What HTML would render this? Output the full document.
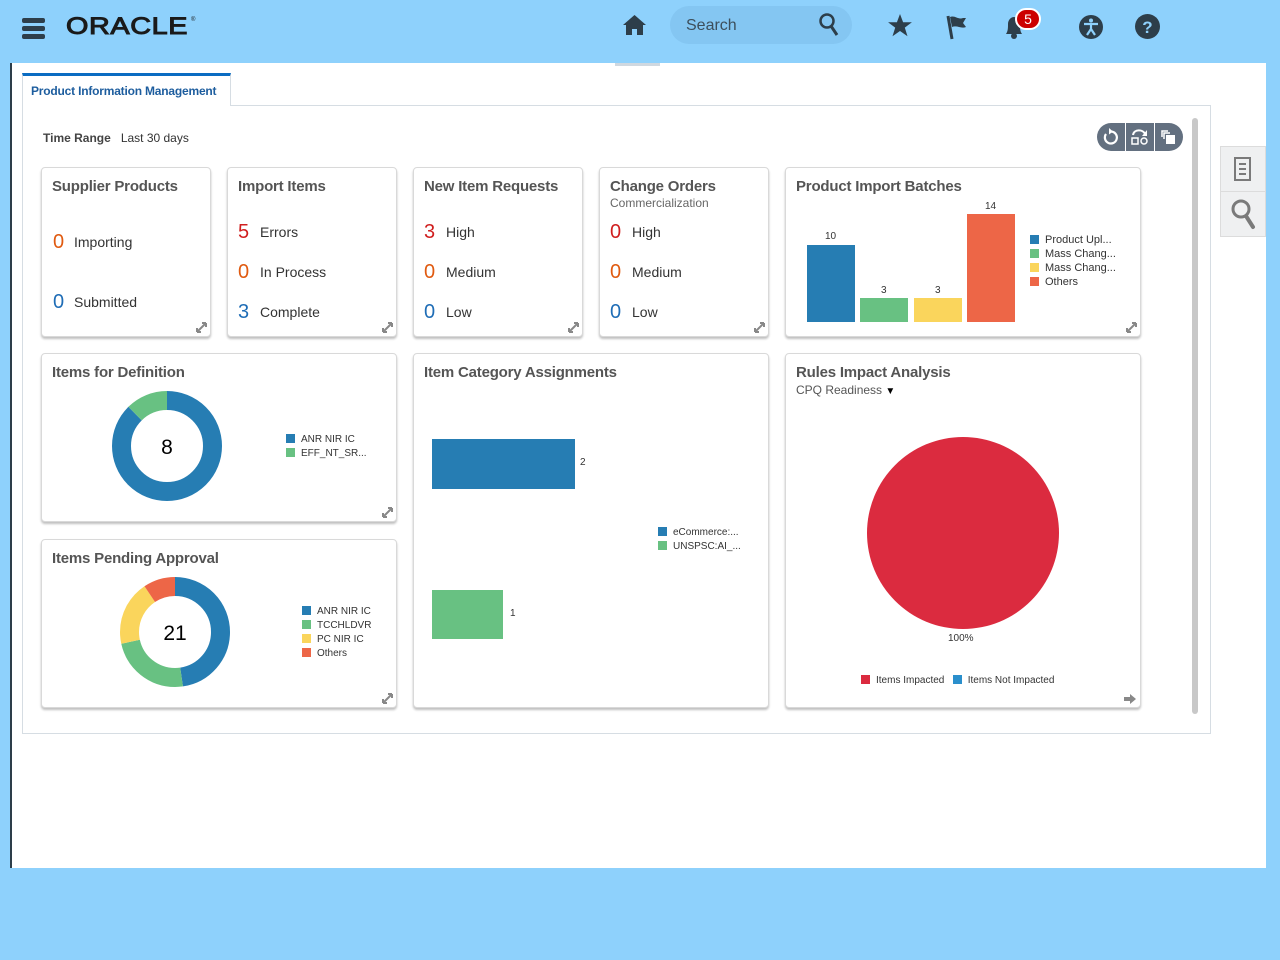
<!DOCTYPE html>
<html><head><meta charset="utf-8"><style>
*{margin:0;padding:0;box-sizing:border-box}
body{width:1280px;height:960px;background:#8ed1fc;font-family:"Liberation Sans",sans-serif;position:relative;overflow:hidden;color:#333}
.a{position:absolute}
.card{position:absolute;background:#fff;border:1px solid #d9d9d9;border-radius:4px;box-shadow:0 2px 2px rgba(0,0,0,.25)}
.t{position:absolute;left:10px;top:10px;font-size:15px;font-weight:bold;color:#555;letter-spacing:-0.2px}
.n{position:absolute;font-size:20px;line-height:20px}
.l{position:absolute;font-size:14px;color:#333}
.r{color:#d01f1f}.o{color:#e05a10}.b{color:#1f6db6}
.ex{position:absolute;right:3px;bottom:3px;width:11px;height:11px}
.lg{position:absolute;font-size:11px;color:#333;line-height:14px}
.lg i{display:inline-block;width:9px;height:9px;margin-right:6px;vertical-align:-1px}
</style></head><body>
<!-- top bar -->
<div class="a" style="left:22px;top:18px;width:23px;height:22px">
<div class="a" style="left:0;top:0;width:23px;height:5px;background:#2d3e4a;border-radius:2px"></div>
<div class="a" style="left:0;top:8px;width:23px;height:5px;background:#2d3e4a;border-radius:2px"></div>
<div class="a" style="left:0;top:16px;width:23px;height:5px;background:#2d3e4a;border-radius:2px"></div>
</div>
<div class="a" style="left:66px;top:13px;font-size:24px;font-weight:normal;-webkit-text-stroke:1px #1a1a1a;letter-spacing:0.5px;color:#1a1a1a;transform:scaleX(1.2);transform-origin:left">ORACLE</div>
<div class="a" style="left:191px;top:17px;font-size:6px;color:#1a1a1a">®</div>
<svg class="a" style="left:622px;top:14px" width="25" height="22" viewBox="0 0 25 22"><path d="M12.5 1L1 11h3v10h6v-6h5v6h6V11h3z" fill="#2d3e4a"/></svg>
<div class="a" style="left:670px;top:6px;width:182px;height:38px;border-radius:19px;background:#84c6f2"></div>
<div class="a" style="left:686px;top:17px;font-size:16px;color:#3d4f5c">Search</div>
<svg class="a" style="left:818px;top:12px" width="22" height="26" viewBox="0 0 22 26"><circle cx="9" cy="9" r="6.5" fill="none" stroke="#2d3e4a" stroke-width="2.5"/><path d="M13 14l6 9" stroke="#2d3e4a" stroke-width="3"/></svg>
<svg class="a" style="left:887px;top:14px" width="26" height="24" viewBox="0 0 26 24"><path d="M13 0l3.1 8.3h8.8l-7.1 5.3 2.7 8.6L13 17l-7.5 5.2 2.7-8.6L1.1 8.3h8.8z" fill="#2d3e4a"/></svg>
<svg class="a" style="left:946px;top:14px" width="26" height="26" viewBox="0 0 26 26"><path d="M2 2l4 23" stroke="#2d3e4a" stroke-width="3"/><path d="M4 3c5-2 8 3 13 1l3 0-3 5 3 4c-5 2-9-2-14 0z" fill="#2d3e4a"/></svg>
<svg class="a" style="left:1002px;top:14px" width="24" height="26" viewBox="0 0 24 26"><path d="M4 20c2-3 2-6 2-10 0-4 3-7 6-7s6 3 6 7c0 4 0 7 2 10z" fill="#2d3e4a"/><circle cx="12" cy="22" r="3" fill="#2d3e4a"/></svg>
<div class="a" style="left:1015px;top:8px;width:26px;height:22px;border-radius:11px;background:#c00;border:2px solid #fff;color:#fff;font-size:14px;text-align:center;line-height:18px">5</div>
<svg class="a" style="left:1079px;top:15px" width="24" height="24" viewBox="0 0 24 24"><circle cx="12" cy="12" r="12" fill="#2d3e4a"/><circle cx="12" cy="5.5" r="2" fill="#8ed1fc"/><path d="M5 9h14M12 9v5M12 14l-4 6M12 14l4 6" stroke="#8ed1fc" stroke-width="2.2" fill="none"/></svg>
<svg class="a" style="left:1135px;top:14px" width="25" height="25" viewBox="0 0 25 25"><circle cx="12.5" cy="12.5" r="12.5" fill="#2d3e4a"/><text x="12.5" y="19" text-anchor="middle" font-size="17" font-weight="bold" fill="#8ed1fc" font-family="Liberation Sans">?</text></svg>

<!-- content area -->
<div class="a" style="left:10px;top:63px;width:1256px;height:805px;background:#fff;border-left:2px solid #2d3e4a"></div>
<div class="a" style="left:615px;top:63px;width:45px;height:3px;background:#cfd8e0"></div>
<div class="a" style="left:22px;top:105px;width:1189px;height:629px;border:1px solid #d6dde3"></div>
<div class="a" style="left:22px;top:73px;width:209px;height:33px;background:#fff;border:1px solid #d6dde3;border-top:3px solid #0a6cc2;border-bottom:none"></div>
<div class="a" style="left:31px;top:84px;font-size:12px;font-weight:bold;color:#1d5d9e;letter-spacing:-0.2px">Product Information Management</div>
<div class="a" style="left:43px;top:131px;font-size:12px;color:#333"><b style="color:#444">Time Range</b>&nbsp;&nbsp; Last 30 days</div>
<!-- toolbar -->
<div class="a" style="left:1097px;top:123px;width:86px;height:28px;border-radius:14px;background:#637080"></div>
<div class="a" style="left:1125px;top:123px;width:1px;height:28px;background:#fff"></div>
<div class="a" style="left:1154px;top:123px;width:1px;height:28px;background:#fff"></div>
<svg class="a" style="left:1102px;top:128px" width="18" height="18" viewBox="0 0 18 18"><path d="M4 6a6 6 0 1 0 5-2.5" stroke="#fff" stroke-width="2.2" fill="none"/><path d="M7 0l4 3.5-4 3z" fill="#fff"/></svg>
<svg class="a" style="left:1130px;top:128px" width="20" height="18" viewBox="0 0 20 18"><path d="M3 7c1-6 10-6 12-1" stroke="#fff" stroke-width="2" fill="none"/><path d="M17 2v6h-5z" fill="#fff"/><rect x="2" y="10" width="6" height="6" stroke="#fff" stroke-width="1.5" fill="none"/><circle cx="14" cy="13" r="3" stroke="#fff" stroke-width="1.5" fill="none"/></svg>
<svg class="a" style="left:1160px;top:129px" width="18" height="16" viewBox="0 0 18 16"><path d="M2 8V2h6M4 10V4h6" stroke="#fff" stroke-width="1.5" fill="none"/><rect x="6" y="6" width="9" height="9" fill="#fff"/></svg>
<div class="a" style="left:1192px;top:118px;width:6px;height:596px;background:#c8c8c8;border-radius:3px"></div>
<!-- right drawer -->
<div class="a" style="left:1220px;top:146px;width:46px;height:91px;background:#eff0f1;border:1px solid #dcdcdc"></div>
<div class="a" style="left:1220px;top:191px;width:46px;height:1px;background:#dcdcdc"></div>
<svg class="a" style="left:1233px;top:156px" width="20" height="26" viewBox="0 0 20 26"><rect x="2" y="2" width="15" height="22" stroke="#7a7a7a" stroke-width="2" fill="none"/><path d="M6 8h7M6 13h7M6 18h7" stroke="#7a7a7a" stroke-width="2"/></svg>
<svg class="a" style="left:1230px;top:198px" width="28" height="34" viewBox="0 0 28 34"><circle cx="11" cy="11" r="8" stroke="#7a7a7a" stroke-width="3" fill="none"/><path d="M16 18l7 11" stroke="#7a7a7a" stroke-width="4" stroke-linecap="round"/></svg>

<!-- Row 1 -->
<div class="card" style="left:41px;top:167px;width:170px;height:170px">
<div class="t">Supplier Products</div>
<div class="n o" style="left:11px;top:64px">0</div><div class="l" style="left:32px;top:66px">Importing</div>
<div class="n b" style="left:11px;top:124px">0</div><div class="l" style="left:32px;top:126px">Submitted</div>
<svg class="ex" viewBox="0 0 11 11"><path d="M1 10l9-9M1 10V6M1 10h4M10 1v4M10 1H6" stroke="#888" stroke-width="2" fill="none"/></svg></div>
<div class="card" style="left:227px;top:167px;width:170px;height:170px">
<div class="t">Import Items</div>
<div class="n r" style="left:10px;top:54px">5</div><div class="l" style="left:32px;top:56px">Errors</div>
<div class="n o" style="left:10px;top:94px">0</div><div class="l" style="left:32px;top:96px">In Process</div>
<div class="n b" style="left:10px;top:134px">3</div><div class="l" style="left:32px;top:136px">Complete</div>
<svg class="ex" viewBox="0 0 11 11"><path d="M1 10l9-9M1 10V6M1 10h4M10 1v4M10 1H6" stroke="#888" stroke-width="2" fill="none"/></svg></div>
<div class="card" style="left:413px;top:167px;width:170px;height:170px">
<div class="t">New Item Requests</div>
<div class="n r" style="left:10px;top:54px">3</div><div class="l" style="left:32px;top:56px">High</div>
<div class="n o" style="left:10px;top:94px">0</div><div class="l" style="left:32px;top:96px">Medium</div>
<div class="n b" style="left:10px;top:134px">0</div><div class="l" style="left:32px;top:136px">Low</div>
<svg class="ex" viewBox="0 0 11 11"><path d="M1 10l9-9M1 10V6M1 10h4M10 1v4M10 1H6" stroke="#888" stroke-width="2" fill="none"/></svg></div>
<div class="card" style="left:599px;top:167px;width:170px;height:170px">
<div class="t">Change Orders</div>
<div class="a" style="left:10px;top:28px;font-size:12px;color:#666">Commercialization</div>
<div class="n r" style="left:10px;top:54px">0</div><div class="l" style="left:32px;top:56px">High</div>
<div class="n o" style="left:10px;top:94px">0</div><div class="l" style="left:32px;top:96px">Medium</div>
<div class="n b" style="left:10px;top:134px">0</div><div class="l" style="left:32px;top:136px">Low</div>
<svg class="ex" viewBox="0 0 11 11"><path d="M1 10l9-9M1 10V6M1 10h4M10 1v4M10 1H6" stroke="#888" stroke-width="2" fill="none"/></svg></div>
<div class="card" style="left:785px;top:167px;width:356px;height:170px">
<div class="t">Product Import Batches</div>
<svg class="ex" viewBox="0 0 11 11"><path d="M1 10l9-9M1 10V6M1 10h4M10 1v4M10 1H6" stroke="#888" stroke-width="2" fill="none"/></svg></div>
<div class="a" style="left:807px;top:245px;width:48px;height:77px;background:#267db3"></div>
<div class="a" style="left:860px;top:298px;width:48px;height:24px;background:#68c182"></div>
<div class="a" style="left:914px;top:298px;width:48px;height:24px;background:#fad55c"></div>
<div class="a" style="left:967px;top:214px;width:48px;height:108px;background:#ed6647"></div>
<div class="a" style="left:825px;top:231px;font-size:10px">10</div>
<div class="a" style="left:881px;top:285px;font-size:10px">3</div>
<div class="a" style="left:935px;top:285px;font-size:10px">3</div>
<div class="a" style="left:985px;top:201px;font-size:10px">14</div>
<div class="lg" style="left:1030px;top:233px"><i style="background:#267db3"></i>Product Upl...<br><i style="background:#68c182"></i>Mass Chang...<br><i style="background:#fad55c"></i>Mass Chang...<br><i style="background:#ed6647"></i>Others</div>

<!-- Row 2 -->
<div class="card" style="left:41px;top:353px;width:356px;height:169px">
<div class="t">Items for Definition</div>
<svg class="ex" viewBox="0 0 11 11"><path d="M1 10l9-9M1 10V6M1 10h4M10 1v4M10 1H6" stroke="#888" stroke-width="2" fill="none"/></svg></div>
<svg class="a" style="left:112px;top:391px" width="110" height="110" viewBox="0 0 110 110"><g transform="rotate(-90 55 55)" fill="none" stroke-width="19">
<circle cx="55" cy="55" r="45.5" stroke="#267db3" stroke-dasharray="250.1 300"/>
<circle cx="55" cy="55" r="45.5" stroke="#68c182" stroke-dasharray="35.8 300" stroke-dashoffset="-250.1"/></g>
<text x="55" y="63" text-anchor="middle" font-size="21" fill="#000" font-family="Liberation Sans">8</text></svg>
<div class="lg" style="left:286px;top:433px;font-size:10px"><i style="background:#267db3"></i>ANR NIR IC<br><i style="background:#68c182"></i>EFF_NT_SR...</div>

<div class="card" style="left:41px;top:539px;width:356px;height:169px">
<div class="t">Items Pending Approval</div>
<svg class="ex" viewBox="0 0 11 11"><path d="M1 10l9-9M1 10V6M1 10h4M10 1v4M10 1H6" stroke="#888" stroke-width="2" fill="none"/></svg></div>
<svg class="a" style="left:120px;top:577px" width="110" height="110" viewBox="0 0 110 110"><g transform="rotate(-90 55 55)" fill="none" stroke-width="19">
<circle cx="55" cy="55" r="45.5" stroke="#267db3" stroke-dasharray="136.1 300"/>
<circle cx="55" cy="55" r="45.5" stroke="#68c182" stroke-dasharray="68.1 300" stroke-dashoffset="-136.1"/>
<circle cx="55" cy="55" r="45.5" stroke="#fad55c" stroke-dasharray="54.5 300" stroke-dashoffset="-204.2"/>
<circle cx="55" cy="55" r="45.5" stroke="#ed6647" stroke-dasharray="27.3 300" stroke-dashoffset="-258.7"/></g>
<text x="55" y="63" text-anchor="middle" font-size="21" fill="#000" font-family="Liberation Sans">21</text></svg>
<div class="lg" style="left:302px;top:605px;font-size:10px"><i style="background:#267db3"></i>ANR NIR IC<br><i style="background:#68c182"></i>TCCHLDVR<br><i style="background:#fad55c"></i>PC NIR IC<br><i style="background:#ed6647"></i>Others</div>

<div class="card" style="left:413px;top:353px;width:356px;height:355px">
<div class="t">Item Category Assignments</div></div>
<div class="a" style="left:432px;top:439px;width:143px;height:50px;background:#267db3"></div>
<div class="a" style="left:580px;top:457px;font-size:10px">2</div>
<div class="a" style="left:432px;top:590px;width:71px;height:49px;background:#68c182"></div>
<div class="a" style="left:510px;top:608px;font-size:10px">1</div>
<div class="lg" style="left:658px;top:526px;font-size:10px"><i style="background:#267db3"></i>eCommerce:...<br><i style="background:#68c182"></i>UNSPSC:AI_...</div>

<div class="card" style="left:785px;top:353px;width:356px;height:355px">
<div class="t">Rules Impact Analysis</div>
<div class="a" style="left:10px;top:29px;font-size:12px;color:#555">CPQ Readiness <span style="font-size:10px;color:#000">▼</span></div>
<svg class="a" style="right:4px;bottom:3px" width="12" height="10" viewBox="0 0 12 10"><path d="M0 3h6V0l6 5-6 5V7H0z" fill="#888"/></svg></div>
<div class="a" style="left:867px;top:437px;width:192px;height:192px;border-radius:50%;background:#db2b3f"></div>
<div class="a" style="left:948px;top:633px;font-size:10px">100%</div>
<div class="lg" style="left:861px;top:674px;font-size:10px"><i style="background:#db2b3f"></i>Items Impacted &nbsp;&nbsp;<i style="background:#2a8fcc"></i>Items Not Impacted</div>
</body></html>
